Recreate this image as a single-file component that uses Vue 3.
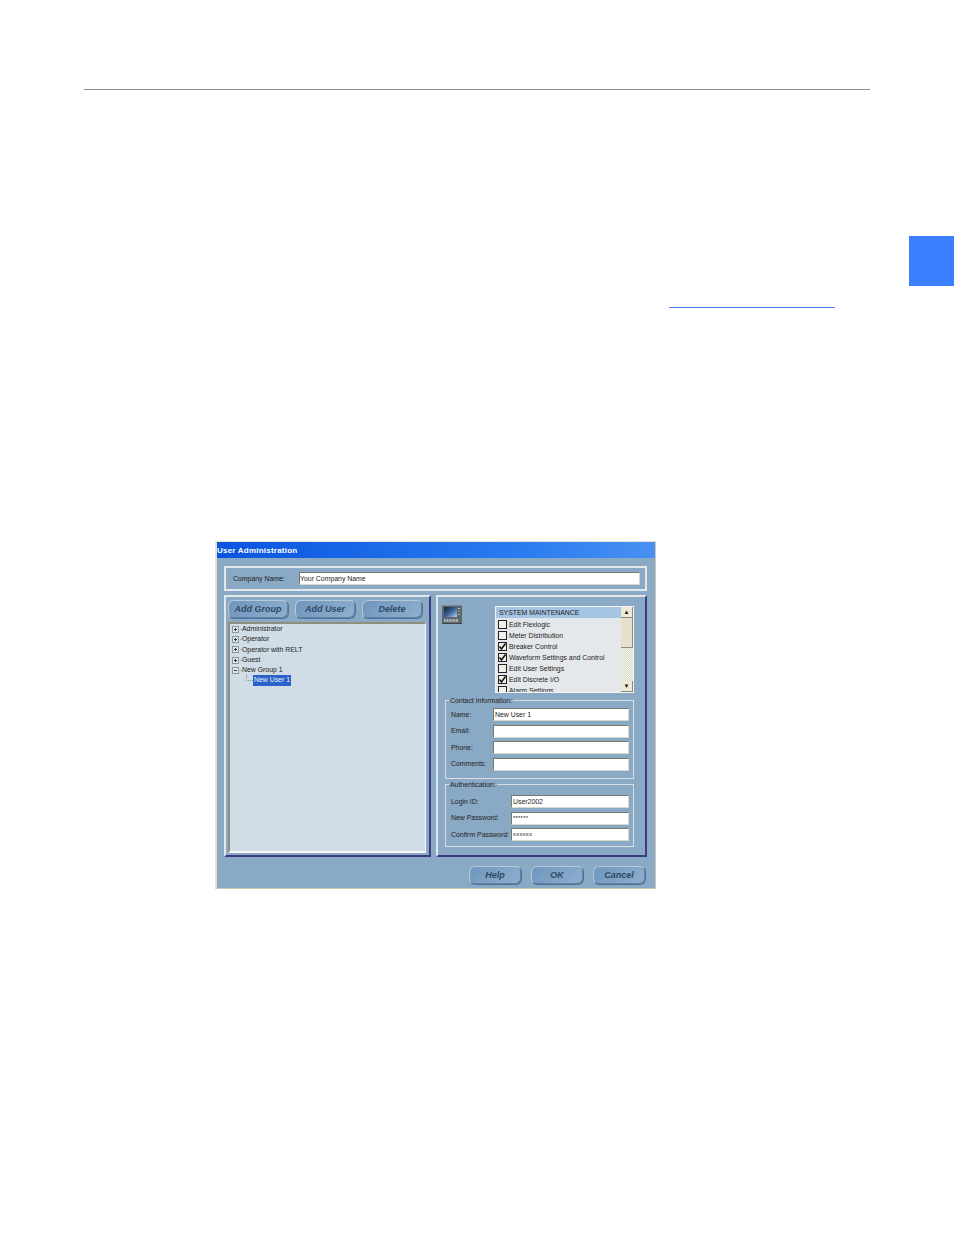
<template>
  <div class="page">
    <div class="head-rule"></div>
    <div class="tab-row"><div class="tab"></div></div>
    <div class="link-row"><div class="link-line"></div></div>

    <div class="dialog">
      <div class="title-bar">User Administration</div>
      <div class="dialog-body">
        <div class="panel company">
          <span class="company-label">Company Name:</span>
          <div class="input company-input">Your Company Name</div>
        </div>

        <div class="columns">
          <div class="panel left-panel">
            <div class="btn-row">
              <button v-for="b in topButtons" :key="b" class="btn">{{ b }}</button>
            </div>
            <div class="tree">
              <div v-for="g in groups" :key="g.name" class="tree-row">
                <svg class="expander" width="7" height="7" viewBox="0 0 7 7">
                  <rect x="0.5" y="0.5" width="6" height="6" fill="#dfe6ec" stroke="#8c969e" />
                  <path d="M2 3.5H5" stroke="#333" />
                  <path v-if="!g.open" d="M3.5 2V5" stroke="#333" />
                </svg>
                <span class="dash"></span>
                <span>{{ g.name }}</span>
              </div>
              <div class="tree-row child">
                <span class="elbow"></span>
                <span class="selected">New User 1</span>
              </div>
            </div>
          </div>

          <div class="panel right-panel">
            <div class="perm-row">
              <svg class="device" width="20" height="19" viewBox="0 0 20 19">
                <defs>
                  <linearGradient id="screen" x1="0" y1="0" x2="1" y2="1">
                    <stop offset="0" stop-color="#16202e" />
                    <stop offset="0.55" stop-color="#3c6aa0" />
                    <stop offset="1" stop-color="#b8d4ee" />
                  </linearGradient>
                </defs>
                <rect x="0" y="0" width="20" height="19" fill="#5c676e" />
                <rect x="0" y="0" width="20" height="1" fill="#7c878e" />
                <rect x="0" y="18" width="20" height="1" fill="#3e474e" />
                <rect x="2" y="2" width="13" height="10" fill="url(#screen)" />
                <rect x="16" y="3" width="2" height="1" fill="#c8c090" />
                <rect x="16" y="6" width="2" height="1" fill="#8aa06c" />
                <rect x="16" y="9" width="2" height="1" fill="#aab2ba" />
                <rect x="2" y="14" width="14" height="3" fill="#a8b0b6" />
                <path d="M4 14V17M7 14V17M10 14V17M13 14V17" stroke="#6c767c" />
              </svg>
              <div class="perm-list">
                <div class="perm-items">
                  <div class="perm-head">SYSTEM MAINTENANCE</div>
                  <div v-for="p in perms" :key="p.name" class="perm-item">
                    <span class="check">
                      <svg v-if="p.on" width="9" height="9" viewBox="0 0 9 9">
                        <path d="M1.5 4.5 L3.5 7 L7.5 1.5" fill="none" stroke="#111" stroke-width="1.6" />
                      </svg>
                    </span>
                    <span>{{ p.name }}</span>
                  </div>
                </div>
                <div class="scrollbar">
                  <div class="arrow">▲</div>
                  <div class="thumb"></div>
                  <div class="track"></div>
                  <div class="arrow">▼</div>
                </div>
              </div>
            </div>

            <div class="fieldset contact">
              <span class="legend">Contact Information:</span>
              <div v-for="f in contact" :key="f.label" class="field">
                <span class="field-label">{{ f.label }}</span>
                <div class="input">{{ f.value }}</div>
              </div>
            </div>

            <div class="fieldset auth">
              <span class="legend">Authentication:</span>
              <div v-for="f in auth" :key="f.label" class="field">
                <span class="field-label">{{ f.label }}</span>
                <div class="input" :class="{ pass: f.pass }">{{ f.value }}</div>
              </div>
            </div>
          </div>
        </div>

        <div class="footer">
          <button v-for="b in footButtons" :key="b" class="btn foot-btn">{{ b }}</button>
        </div>
      </div>
    </div>
  </div>
</template>

<script setup>
const topButtons = ['Add Group', 'Add User', 'Delete']
const footButtons = ['Help', 'OK', 'Cancel']

const groups = [
  { name: 'Administrator' },
  { name: 'Operator' },
  { name: 'Operator with RELT' },
  { name: 'Guest' },
  { name: 'New Group 1', open: true },
]

const perms = [
  { name: 'Edit Flexlogic', on: false },
  { name: 'Meter Distribution', on: false },
  { name: 'Breaker Control', on: true },
  { name: 'Waveform Settings and Control', on: true },
  { name: 'Edit User Settings', on: false },
  { name: 'Edit Discrete I/O', on: true },
  { name: 'Alarm Settings', on: false },
]

const contact = [
  { label: 'Name:', value: 'New User 1' },
  { label: 'Email:', value: '' },
  { label: 'Phone:', value: '' },
  { label: 'Comments:', value: '' },
]

const auth = [
  { label: 'Login ID:', value: 'User2002' },
  { label: 'New Password:', value: '******', pass: true },
  { label: 'Confirm Password:', value: 'xxxxxx', pass: true },
]
</script>

<style>
html, body {
  background: #fff;
}
</style>

<style scoped>
.page {
  height: 1235px;
  padding-top: 89px;
  box-sizing: border-box;
  overflow: hidden;
  font-family: "Liberation Sans", Arial, sans-serif;
}
.head-rule {
  height: 1px;
  margin: 0 84px;
  background: #8f8f8f;
}
.tab-row {
  display: flex;
  justify-content: flex-end;
  margin-top: 146px;
}
.tab {
  width: 45px;
  height: 50px;
  background: #3b7fff;
}
.link-row {
  margin: 21px 0 0 669px;
}
.link-line {
  width: 166px;
  height: 1px;
  background: #4a7de8;
}
.dialog {
  width: 441px;
  height: 348px;
  margin: 233px 0 0 215px;
  box-sizing: border-box;
  border-left: 2px solid #e6e2d4;
  border-top: 1px solid #e6e2d4;
  border-bottom: 1px solid #cfc9b4;
  border-right: 1px solid #cfc9b4;
  background: #8aa9c4;
  display: flex;
  flex-direction: column;
}
.title-bar {
  height: 16px;
  line-height: 17px;
  background: linear-gradient(90deg, #0a55e0 0%, #2a7cf0 70%, #4a90f2 100%);
  color: #fff;
  font-size: 8px;
  font-weight: bold;
  letter-spacing: 0.22px;
}
.dialog-body {
  flex: 1;
  padding: 8px 8px 0 7px;
  display: flex;
  flex-direction: column;
}
.panel {
  box-sizing: border-box;
  border-top: 2px solid #e4e8ea;
  border-left: 2px solid #e4e8ea;
  border-right: 2px solid #3c3c86;
  border-bottom: 2px solid #3c3c86;
}
.company {
  height: 25px;
  display: flex;
  align-items: center;
  border-right-color: #e4e8ea;
  border-bottom-color: #e4e8ea;
  font-size: 6.9px;
  color: #222;
  padding: 0 5px 0 7px;
}
.company-label {
  width: 66px;
}
.input {
  box-sizing: border-box;
  height: 13px;
  line-height: 11px;
  flex: 1;
  background: #fff;
  border-top: 1px solid #7a7a6a;
  border-left: 1px solid #7a7a6a;
  border-right: 1px solid #d8d8cc;
  border-bottom: 1px solid #d8d8cc;
  font-size: 6.9px;
  color: #222;
  padding-left: 1px;
  white-space: nowrap;
  overflow: hidden;
}
.company-input {
  padding-left: 0;
}
.columns {
  display: flex;
  gap: 5px;
  margin-top: 4px;
}
.left-panel {
  width: 207px;
  height: 262px;
  padding: 3px 3px 3px 2px;
}
.btn-row {
  display: flex;
  gap: 6px;
}
.btn {
  width: 61px;
  height: 19px;
  padding: 0 1px 2px 0;
  box-sizing: border-box;
  border: 1px solid #b4c8da;
  border-right-color: #4f7396;
  border-bottom-color: #4f7396;
  border-radius: 6px;
  box-shadow: inset -1px -1px 0 #5f83a6;
  background: linear-gradient(135deg, #6f96bc 0%, #8fb0d0 100%);
  color: #2e4a66;
  font-family: "Liberation Sans", Arial, sans-serif;
  font-size: 9px;
  font-weight: bold;
  font-style: italic;
}
.tree {
  box-sizing: border-box;
  width: 198px;
  height: 231px;
  margin-top: 3px;
  padding: 0 0 0 2px;
  background: #d0dce6;
  border-top: 2px solid #8f8f7c;
  border-left: 2px solid #8f8f7c;
  border-right: 1px solid #f4f6f8;
  border-bottom: 2px solid #f4f6f8;
  font-size: 6.9px;
  color: #222;
}
.tree-row {
  height: 10.3px;
  line-height: 10.3px;
  display: flex;
  align-items: center;
  white-space: nowrap;
}
.expander {
  flex-shrink: 0;
}
.dash {
  width: 2px;
  height: 1px;
  margin: 0 0 0 1px;
  background: #a4aeb6;
}
.child {
  padding-left: 14px;
}
.elbow {
  width: 6px;
  height: 5px;
  margin-top: -5px;
  border-left: 1px dotted #8c969e;
  border-bottom: 1px dotted #8c969e;
}
.selected {
  background: #2a62c8;
  color: #eef4fc;
  padding: 0 1px;
}
.right-panel {
  width: 211px;
  height: 262px;
  padding: 8px 11px 0 4px;
}
.perm-row {
  display: flex;
  align-items: flex-start;
}
.perm-list {
  width: 139px;
  height: 87px;
  margin: 1px 0 0 33px;
  box-sizing: border-box;
  display: flex;
  background: #e4e8ea;
  border: 1px solid #f2f4f6;
  overflow: hidden;
  font-size: 6.9px;
  color: #222;
}
.perm-items {
  flex: 1;
  overflow: hidden;
}
.perm-head {
  height: 11px;
  line-height: 11px;
  background: #a6c4e4;
  padding-left: 3px;
  margin-bottom: 1px;
}
.perm-item {
  height: 11px;
  display: flex;
  align-items: center;
  padding-left: 2px;
  white-space: nowrap;
}
.check {
  box-sizing: border-box;
  width: 9px;
  height: 9px;
  margin-right: 2px;
  border: 1px solid #222;
  background: #f0f0ea;
  display: flex;
  flex-shrink: 0;
}
.check svg {
  margin: -1px;
}
.scrollbar {
  width: 12px;
  display: flex;
  flex-direction: column;
}
.arrow {
  height: 11px;
  line-height: 11px;
  background: #ece9d8;
  text-align: center;
  font-size: 6px;
  color: #111;
  border-right: 1px solid #8c8a78;
  border-bottom: 1px solid #8c8a78;
  box-sizing: border-box;
}
.thumb {
  height: 30px;
  background: #e4e0cc;
  border-right: 1px solid #8c8a78;
  border-bottom: 1px solid #8c8a78;
  box-sizing: border-box;
}
.track {
  flex: 1;
  background: repeating-conic-gradient(#f4f2e8 0 25%, #dcdccc 0 50%) 0 0 / 2px 2px;
}
.fieldset {
  position: relative;
  box-sizing: border-box;
  border: 1px solid #d6dee4;
  margin-left: 3px;
  width: 189px;
  display: flex;
  flex-direction: column;
  font-size: 6.9px;
  color: #222;
}
.legend {
  position: absolute;
  top: -5px;
  left: 3px;
  padding: 0 1px;
  line-height: 9px;
  background: #8aa9c4;
  font-size: 6.9px;
}
.contact {
  height: 79px;
  margin-top: 7px;
  padding: 7px 4px 0 5px;
  gap: 3.5px;
}
.auth {
  height: 63px;
  margin-top: 5px;
  padding: 10px 4px 0 5px;
  gap: 3.5px;
}
.field {
  display: flex;
  align-items: center;
}
.field-label {
  white-space: nowrap;
  font-size: 6.9px;
  margin-top: -1px;
}
.contact .field-label {
  width: 42px;
}
.auth .field-label {
  width: 60px;
}
.pass {
  font-size: 6px;
  letter-spacing: 0.2px;
}
.footer {
  display: flex;
  justify-content: flex-end;
  gap: 9px;
  margin-top: 9px;
  padding-right: 1px;
}
.foot-btn {
  width: 53px;
}
</style>
